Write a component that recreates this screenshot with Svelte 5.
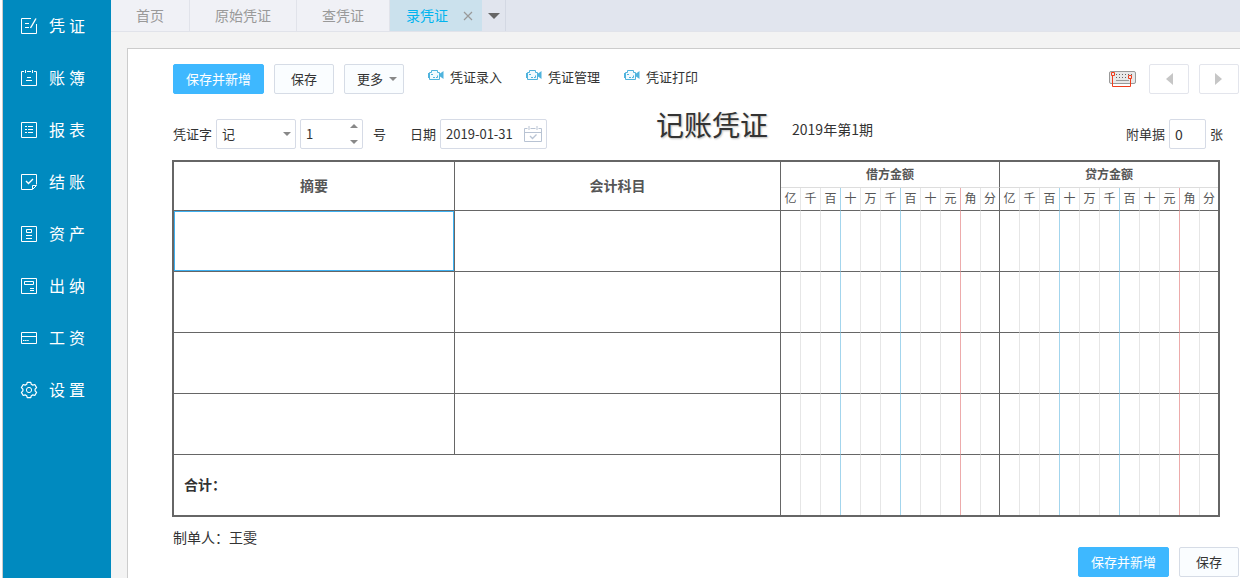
<script lang="ts">
  const menus = [
    { id: "voucher", name: "凭证" },
    { id: "book", name: "账簿" },
    { id: "report", name: "报表" },
    { id: "closing", name: "结账" },
    { id: "asset", name: "资产" },
    { id: "cashier", name: "出纳" },
    { id: "salary", name: "工资" },
    { id: "setting", name: "设置" },
  ];
  const tabs = ["首页", "原始凭证", "查凭证"];
  const videos = ["凭证录入", "凭证管理", "凭证打印"];
  const units = ["亿", "千", "百", "十", "万", "千", "百", "十", "元", "角", "分"];
  const sides = ["debit", "credit"];
  const rows = [0, 1, 2, 3];

  let word = $state("记");
  let number = $state("1");
  let date = $state("2019-01-31");
  let attachments = $state("0");
  let summary = $state("");

  const step = (n: number) => {
    number = String(Math.max(1, Number(number) + n));
  };
</script>

{#snippet unitCells()}
  {#each sides as side}
    {#each units as unit, i}
      <td class="unit {side}" class:blue={i === 2 || i === 5} class:red={i === 8} class:last={i === 10}></td>
    {/each}
  {/each}
{/snippet}

<div class="page">
  <nav class="sidebar">
    {#each menus as menu}
      <a class="menu" href="#{menu.id}">
        <svg width="18" height="18" viewBox="0 0 18 18" fill="none" stroke="#fff">
          {#if menu.id === "voucher"}
            <path d="M11 1.5H1.5v15h15V7M5 6.5h4M5 10.5h4" />
            <path d="M16 1.5l-5.5 9.5" stroke-width="1.4" />
          {:else if menu.id === "book"}
            <path d="M4 2.5H1.5v14h15v-14H14M7 2.5h4M5.5 1v3M12.5 1v3M7 8.5h4M6 11.5h6" />
          {:else if menu.id === "report"}
            <path d="M1.5 1.5h15v15h-15zM5 5.5h2M8 5.5h5M5 8.5h2M8 8.5h5M5 11.5h2M8 11.5h5" />
          {:else if menu.id === "closing"}
            <path d="M16.5 11.5v-10h-15v15H12M16.5 12.5h-4v4z" />
            <path d="M6 8l2.5 2.5L13 6" stroke-width="1.4" />
          {:else if menu.id === "asset"}
            <path d="M1.5 1.5h15v15h-15zM6.5 4.5h5v3h-5zM6 10.5h6M6 13.5h6" />
          {:else if menu.id === "cashier"}
            <path d="M1.5 1.5h15v15h-15zM4.5 4.5h9v3h-9zM10 11.5h4M10 13.5h4" />
          {:else if menu.id === "salary"}
            <path d="M1.5 3.5h15v11h-15zM1.5 7.5h15" />
            <path d="M3 11.5h6" stroke-dasharray="1.5 .6" />
          {:else}
            <circle cx="9" cy="9" r="2.6" />
            <path d="M7.2 1.3h3.6l.5 2 1.5.8 2-.6 1.8 3.1-1.5 1.5v1.8l1.5 1.5-1.8 3.1-2-.6-1.5.8-.5 2H7.2l-.5-2-1.5-.8-2 .6-1.8-3.1 1.5-1.5V8.1L1.4 6.6l1.8-3.1 2 .6 1.5-.8z" stroke-width="1.2" stroke-linejoin="round" />
          {/if}
        </svg>
        <span>{menu.name}</span>
      </a>
    {/each}
  </nav>

  <div class="main">
    <div class="tabs">
      {#each tabs as tab}
        <button class="tab">{tab}</button>
      {/each}
      <div class="tab_active">
        <button class="tab_name">录凭证</button>
        <button class="tab_close" aria-label="关闭">
          <svg width="10" height="10" viewBox="0 0 10 10" stroke="#999" stroke-width="1.2"><path d="M1 1l8 8M9 1L1 9" /></svg>
        </button>
      </div>
      <button class="tab_more" aria-label="更多标签">
        <svg width="12" height="6" viewBox="0 0 12 6"><path d="M0 0h12L6 6z" fill="#666" /></svg>
      </button>
    </div>

    <div class="panel">
      <div class="toolbar">
        <button class="btn primary">保存并新增</button>
        <button class="btn">保存</button>
        <button class="btn more">
          更多
          <svg width="8" height="4" viewBox="0 0 8 4"><path d="M0 0h8L4 4z" fill="#888" /></svg>
        </button>
        <div class="videos">
          {#each videos as video}
            <a class="video" href="#video">
              <svg width="16" height="12" viewBox="0 0 16 12" fill="#f1fafe" stroke="#4fb3dd">
                <path d="M1.5 3.5h2v-2h6v2h2v7h-10z" stroke-linejoin="round" />
                <path d="M.5 4v5" />
                <path d="M15.5 2v8L12 7.5v-3z" fill="#4fb3dd" stroke="none" />
                <path d="M3 5.5h2M5 8.5h2M8 8.5h1.5v-2" fill="none" />
              </svg>
              {video}
            </a>
          {/each}
        </div>
        <button class="keyboard" aria-label="快捷键">
          <svg width="28" height="18" viewBox="0 0 28 18" fill="none">
            <rect x=".5" y="1.5" width="26" height="12" rx="1.5" fill="#e8e8e8" stroke="#999" />
            <path d="M7 4.5h16M7 7.5h12" stroke="#666" stroke-dasharray="1 2" />
            <path d="M7 10.5h13" stroke="#999" />
            <path d="M2.5 2.5h3v3h-3zM19.5 5.5h3v3h-3zM3.5 6v10.5h18V9" stroke="#f03c1c" />
          </svg>
        </button>
        <button class="page_btn" aria-label="上一张">
          <svg width="8" height="12" viewBox="0 0 8 12"><path d="M8 0v12L1 6z" fill="#c6c6c6" /></svg>
        </button>
        <button class="page_btn" aria-label="下一张">
          <svg width="8" height="12" viewBox="0 0 8 12"><path d="M0 0v12l7-6z" fill="#c6c6c6" /></svg>
        </button>
      </div>

      <div class="info">
        <label for="word">凭证字</label>
        <div class="box word_box">
          <select id="word" bind:value={word}>
            <option>记</option>
            <option>收</option>
            <option>付</option>
            <option>转</option>
          </select>
          <svg width="8" height="4" viewBox="0 0 8 4"><path d="M0 0h8L4 4z" fill="#888" /></svg>
        </div>
        <div class="box number_box">
          <input id="number" type="text" bind:value={number} />
          <div class="steps">
            <button aria-label="加" onclick={() => step(1)}>
              <svg width="8" height="4" viewBox="0 0 8 4"><path d="M0 4h8L4 0z" fill="#888" /></svg>
            </button>
            <button aria-label="减" onclick={() => step(-1)}>
              <svg width="8" height="4" viewBox="0 0 8 4"><path d="M0 0h8L4 4z" fill="#888" /></svg>
            </button>
          </div>
        </div>
        <label class="number_label" for="number">号</label>
        <label for="date">日期</label>
        <div class="box date_box">
          <input id="date" type="text" bind:value={date} />
          <svg width="18" height="18" viewBox="0 0 18 18" fill="none" stroke="#b8c3d3">
            <path d="M3.5 3.5h-3v13h17v-13h-3M6.5 3.5h5M.5 7.5h17M5 1v4M13 1v4" />
            <path d="M6 11l2.5 2.5L12.5 9.5" stroke-width="1.3" />
          </svg>
        </div>
        <h1>记账凭证</h1>
        <span class="period">2019年第1期</span>
        <div class="attach">
          <label for="attach">附单据</label>
          <input id="attach" class="box" type="text" bind:value={attachments} />
          <span>张</span>
        </div>
      </div>

      <table>
        <colgroup>
          <col class="col_summary" />
          <col />
          {#each sides as side}
            {#each units as unit, i}
              <col class={i < 10 ? "col_unit" : "col_" + side} />
            {/each}
          {/each}
        </colgroup>
        <thead>
          <tr class="head">
            <th rowspan="2">摘要</th>
            <th rowspan="2">会计科目</th>
            <th class="amount" colspan="11">借方金额</th>
            <th class="amount credit" colspan="11">贷方金额</th>
          </tr>
          <tr class="units">
            {#each sides as side}
              {#each units as unit, i}
                <th class="unit {side}" class:blue={i === 2 || i === 5} class:red={i === 8} class:last={i === 10}>{unit}</th>
              {/each}
            {/each}
          </tr>
        </thead>
        <tbody>
          {#each rows as row}
            <tr>
              <td>
                {#if row === 0}
                  <textarea aria-label="摘要" bind:value={summary}></textarea>
                {/if}
              </td>
              <td></td>
              {@render unitCells()}
            </tr>
          {/each}
          <tr class="total">
            <td class="total_name" colspan="2">合计：</td>
            {@render unitCells()}
          </tr>
        </tbody>
      </table>

      <div class="footer">
        <div class="maker">制单人：王雯</div>
        <button class="btn primary">保存并新增</button>
        <button class="btn">保存</button>
      </div>
    </div>
  </div>
</div>

<style>
  :global(body) {
    background: #fff;
  }

  .page {
    display: flex;
    min-height: 100vh;
    box-sizing: border-box;
    padding-left: 2px;
    font-family: "Noto Sans CJK SC", sans-serif;
    font-size: 13px;
    line-height: 20px;
    color: #333;
  }

  button,
  input,
  select,
  textarea {
    box-sizing: border-box;
    margin: 0;
    padding: 0;
    border: 0;
    background: none;
    font: inherit;
    color: inherit;
    outline: none;
  }

  button {
    cursor: pointer;
  }

  svg {
    display: block;
    flex: none;
  }

  .sidebar {
    flex: none;
    width: 108px;
    border-left: 1px solid #ccc;
    background: #008abf;
  }

  .menu {
    display: flex;
    align-items: center;
    gap: 11px;
    height: 52px;
    padding-left: 17px;
    color: #fff;
    font-size: 16px;
    letter-spacing: 4px;
    text-decoration: none;
  }

  .menu span {
    padding-bottom: 2px;
  }

  .main {
    display: flex;
    flex-direction: column;
    flex: 1;
    min-width: 0;
    background: #f3f3f3;
  }

  .tabs {
    display: flex;
    height: 31px;
    border-bottom: 1px solid #e1e3ea;
    background: #e1e5ee;
    font-size: 14px;
    color: #999;
  }

  .tab {
    padding: 0 25px 2px;
    border-right: 1px solid #e1e3ea;
    background: #f0f1f6;
  }

  .tab_active {
    display: flex;
    align-items: center;
    gap: 15px;
    padding: 0 9px 0 16px;
    background: #cbe1ed;
  }

  .tab_name {
    padding-bottom: 2px;
    color: #00b4ef;
  }

  .tab_more {
    display: flex;
    align-items: center;
    justify-content: center;
    width: 24px;
    border-right: 1px solid #d3d8e3;
  }

  .panel {
    flex: 1;
    margin: 16px 0 0 16px;
    padding: 15px 1px 0 44px;
    border: 1px solid #ccc;
    border-width: 1px 0 0 1px;
    background: #fff;
  }

  .toolbar {
    display: flex;
    gap: 10px;
    padding-left: 1px;
  }

  .btn {
    height: 30px;
    padding: 0 16px 1px;
    border: 1px solid #d6dce6;
    border-radius: 2px;
    background: #fafdff;
  }

  .primary {
    padding: 0 12px 1px;
    border-color: #3eb8ff;
    background: #3eb8ff;
    color: #fff;
  }

  .more {
    display: flex;
    align-items: center;
    gap: 6px;
    padding: 0 6px 0 12px;
  }

  .videos {
    display: flex;
    gap: 24px;
    height: 26px;
    margin-left: 14px;
  }

  .video {
    display: flex;
    align-items: center;
    gap: 6px;
    color: #333;
    text-decoration: none;
  }

  .video svg {
    margin-bottom: 4px;
  }

  .keyboard {
    margin-left: auto;
    padding-right: 2px;
  }

  .page_btn {
    display: flex;
    align-items: center;
    justify-content: center;
    width: 40px;
    height: 30px;
    border: 1px solid #e3e5ec;
    border-radius: 2px;
  }

  .info {
    display: flex;
    align-items: center;
    gap: 4px;
    height: 46px;
    margin: 17px 16px 3px 1px;
  }

  .box {
    display: flex;
    align-items: center;
    box-sizing: border-box;
    height: 30px;
    border: 1px solid #d6dbe6;
    border-radius: 2px;
    background: #fff;
  }

  .word_box {
    width: 80px;
    padding: 0 4px 0 5px;
  }

  .word_box select {
    flex: 1;
    min-width: 0;
    height: 28px;
    appearance: none;
  }

  .number_box {
    width: 63px;
    padding: 0 4px 0 5px;
  }

  .number_box input {
    flex: 1;
    min-width: 0;
  }

  .steps {
    display: flex;
    flex-direction: column;
    gap: 12px;
  }

  .number_label {
    margin: 0 20px 0 6px;
  }

  .date_box {
    width: 107px;
    padding: 0 4px 0 5px;
  }

  .date_box input {
    flex: 1;
    min-width: 0;
  }

  h1 {
    margin: 0 0 20px 105px;
    font-size: 28px;
    line-height: 30px;
    font-weight: 400;
    text-shadow: 1px 1px 2px #bbb;
  }

  .period {
    margin: 0 0 10px 20px;
    font-size: 14px;
  }

  .attach {
    display: flex;
    align-items: center;
    gap: 4px;
    margin-left: auto;
  }

  .attach input {
    width: 37px;
    padding-left: 5px;
    font-size: 14px;
  }

  table {
    width: calc(100% - 19px);
    table-layout: fixed;
    border: 2px solid #666;
    border-collapse: separate;
    border-spacing: 0;
  }

  .col_summary {
    width: 281px;
  }

  .col_unit {
    width: 20px;
  }

  .col_debit {
    width: 19px;
  }

  .col_credit {
    width: 18px;
  }

  th,
  td {
    box-sizing: border-box;
    height: 61px;
    padding: 0;
    border: 0 solid #666;
    border-width: 0 1px 1px 0;
  }

  th {
    padding-bottom: 2px;
    font-size: 14px;
    color: #555;
  }

  .head th {
    height: 26px;
  }

  .head .amount {
    border-bottom-color: #ddd;
    font-size: 12px;
  }

  .units th {
    height: 23px;
    font-size: 12px;
    font-weight: 400;
    white-space: nowrap;
  }

  .unit {
    border-right-color: #e6e6e6;
  }

  .blue {
    border-right-color: #a3d5ed;
  }

  .red {
    border-right-color: #edabab;
  }

  .last {
    border-right-color: #666;
  }

  .credit.last,
  .amount.credit {
    border-right-width: 0;
  }

  textarea {
    display: block;
    width: 100%;
    height: 60px;
    border: 1px solid #3eb0f0;
    resize: none;
  }

  .total td {
    height: 60px;
    border-bottom-width: 0;
  }

  .total .total_name {
    padding: 0 0 2px 10px;
    font-size: 14px;
    font-weight: 700;
  }

  .footer {
    display: flex;
    align-items: flex-end;
    gap: 10px;
    padding: 10px 0 1px 1px;
  }

  .maker {
    flex: 1;
    align-self: flex-start;
    padding-bottom: 30px;
    font-size: 14px;
  }
</style>
